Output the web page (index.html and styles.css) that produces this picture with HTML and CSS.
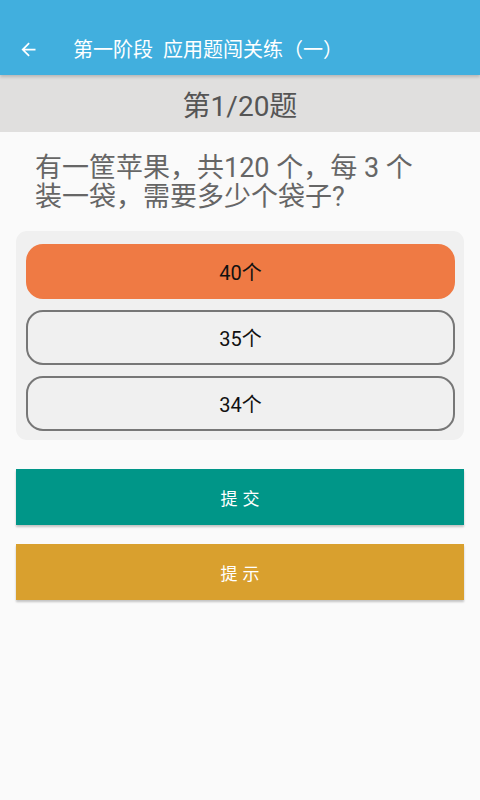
FILE: index.html
```html
<!DOCTYPE html>
<html lang="zh">
<head>
<meta charset="utf-8">
<link rel="stylesheet" href="styles.css">
</head>
<body>
<div class="page">
  <header class="appbar">
    <svg class="back" viewBox="0 0 24 24" width="24" height="24"><path d="M20 11H7.83l5.59-5.59L12 4l-8 8 8 8 1.41-1.41L7.83 13H20v-2z" fill="#fff"/></svg>
    <span class="title">第一阶段&nbsp;&nbsp;应用题闯关练（一）</span>
  </header>
  <div class="progress">第1/20题</div>
  <p class="question">有一筐苹果，共120 个，每 3 个装一袋，需要多少个袋子?</p>
  <div class="options">
    <div class="option selected">40个</div>
    <div class="option">35个</div>
    <div class="option">34个</div>
  </div>
  <div class="actions">
    <div class="btn submit">提交</div>
    <div class="btn hint">提示</div>
  </div>
</div>
</body>
</html>
```
FILE: styles.css
```css
html, body {
  margin: 0;
  padding: 0;
  background: #fafafa;
  font-family: Roboto, "Noto Sans CJK SC", sans-serif;
}
.page {
  width: 480px;
  min-height: 800px;
  background: #fafafa;
}
.appbar {
  height: 75px;
  background: #41afde;
  display: flex;
  align-items: center;
  padding-top: 24px;
  box-sizing: border-box;
  position: relative;
  z-index: 1;
  box-shadow: 0 2px 3px rgba(0,0,0,0.18);
}
.back {
  margin-left: 18px;
  width: 21px;
  height: 21px;
}
.title {
  margin-left: 34px;
  color: #fff;
  font-size: 20px;
  line-height: 24px;
}
.progress {
  height: 57px;
  background: #e0dfde;
  color: #555;
  font-size: 28px;
  display: flex;
  align-items: center;
  justify-content: center;
}
.question {
  margin: 0;
  padding: 22px 55px 19px 35px;
  color: #666;
  font-size: 27px;
  line-height: 29px;
}
.options {
  margin: 0 16px;
  background: #f0f0f0;
  border-radius: 11px;
  padding: 13px 9px 9px 10px;
  display: flex;
  flex-direction: column;
  gap: 11px;
}
.option {
  height: 55px;
  box-sizing: border-box;
  border: 2px solid #777;
  border-radius: 17px;
  display: flex;
  align-items: center;
  justify-content: center;
  color: #111;
  font-size: 20px;
  background: #f0f0f0;
}
.option.selected {
  background: #ef7a44;
  border-color: #ef7a44;
}
.actions {
  margin: 29px 16px 0;
  display: flex;
  flex-direction: column;
  gap: 19px;
}
.btn {
  height: 56px;
  display: flex;
  align-items: center;
  justify-content: center;
  color: #fff;
  font-size: 17px;
  letter-spacing: 5px;
  padding-left: 5px;
  box-shadow: 0 2px 2px rgba(0,0,0,0.22);
}
.submit { background: #009688; }
.hint { background: #d9a02e; }
```
